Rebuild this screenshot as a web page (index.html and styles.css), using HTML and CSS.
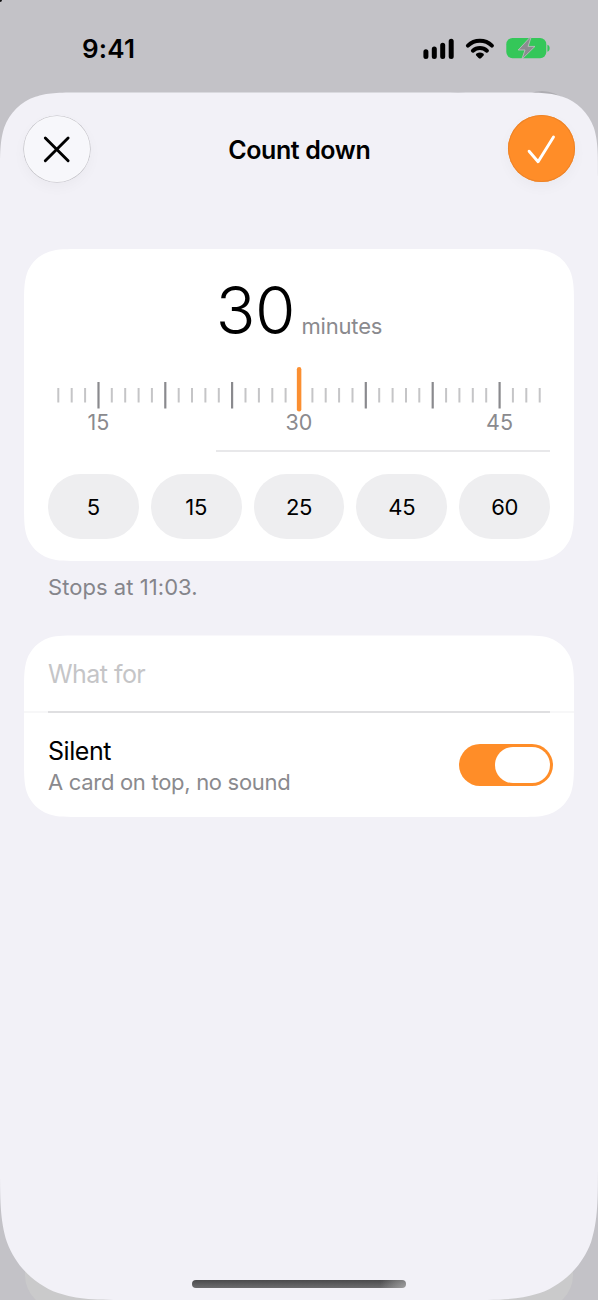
FILE: index.html
```html
<!DOCTYPE html>
<html lang="en">
<head>
<meta charset="utf-8">
<title>Count down</title>
<link rel="stylesheet" href="styles.css">
</head>
<body>
<div class="screen">
  <div class="backdrop-card"></div>
  <div class="backdrop-button first"></div>
  <div class="backdrop-button second"></div>
  <div class="corner-dot"></div>
  <header class="status">
    <span class="time">9:41</span>
    <svg class="status-icons" width="128" height="24" viewBox="0 0 128 24">
      <g stroke="#000" stroke-width="5" stroke-linecap="round">
        <path d="M2.900 15.800v4.700M11.300 13v7.500M19.700 9.200v11.300M28.200 5.200v15.300"/>
      </g>
      <g fill="none" stroke="#000" stroke-width="4" stroke-linecap="round">
        <path d="M44.900 9.600a17.300 17.300 0 0 1 24 0"/>
        <path d="M49.900 14.700a10.300 10.300 0 0 1 14 0"/>
      </g>
      <path d="M56.900 16.500c2.200 0 4 1 4 2.200 0 .8-3.200 4-4 4s-4-3.200-4-4c0-1.200 1.800-2.200 4-2.200z"/>
      <rect x="83.300" y="2" width="40" height="20.300" rx="6.200" fill="#34c759"/>
      <path d="M124.400 8.700c3 .6 3 6.400 0 7z" fill="#34c759"/>
      <path d="M107.200 1.200 95.200 14h6.800l-3.200 9.300L112 10.400h-6.900l3-9.200z" fill="#8c8b90" stroke="#c3c2c7" stroke-width=".8" stroke-linejoin="round"/>
    </svg>
  </header>
  <main class="sheet">
    <nav class="navbar">
      <button class="round close" aria-label="Close">
        <svg width="66" height="66" viewBox="0 0 66 66"><path d="M21.300 22l22.800 22.800M44.100 22l-22.800 22.800" stroke="#000" stroke-width="2.900" stroke-linecap="round"/></svg>
      </button>
      <h1 class="title">Count down</h1>
      <button class="round done" aria-label="Done">
        <svg width="67" height="67" viewBox="0 0 67 67"><path d="M21.100 36.200l9 10.500L45.500 22" fill="none" stroke="#fff" stroke-width="2.900" stroke-linecap="round" stroke-linejoin="round"/></svg>
      </button>
    </nav>
    <section class="card timer">
      <div class="value"><span class="number">30</span><span class="unit">minutes</span></div>
      <svg class="ruler" width="502" height="46" viewBox="48 366 502 46">
        <path stroke="#c5c5c7" stroke-width="2" d="M58.300 388v14.500M71.700 388v14.500M85.100 388v14.500M111.800 388v14.500M125.200 388v14.500M138.600 388v14.500M151.900 388v14.500M178.700 388v14.500M192 388v14.500M205.400 388v14.500M218.800 388v14.500M245.500 388v14.500M258.900 388v14.500M272.300 388v14.500M285.600 388v14.500M312.400 388v14.500M325.700 388v14.500M339.100 388v14.500M352.500 388v14.500M379.200 388v14.500M392.600 388v14.500M406 388v14.500M419.300 388v14.500M446.100 388v14.500M459.400 388v14.500M472.800 388v14.500M486.200 388v14.500M512.900 388v14.500M526.300 388v14.500M539.700 388v14.500"/>
        <path stroke="#8a8a8e" stroke-width="2.200" d="M98.500 382v26.600M165.300 382v26.600M232.100 382v26.600M365.800 382v26.600M432.700 382v26.600M499.600 382v26.600"/>
        <path stroke="#fb8f31" stroke-width="4.500" stroke-linecap="round" d="M299.100 369.300v40"/>
      </svg>
      <div class="marks"><span>15</span><span>30</span><span>45</span></div>
      <div class="divider"></div>
      <div class="presets">
        <button>5</button><button>15</button><button>25</button><button>45</button><button>60</button>
      </div>
    </section>
    <p class="note">Stops at 11:03.</p>
    <section class="card options">
      <div class="field">What for</div>
      <div class="separator"></div>
      <div class="row">
        <div>
          <div class="label">Silent</div>
          <div class="sub">A card on top, no sound</div>
        </div>
        <div class="switch"><div class="knob"></div></div>
      </div>
    </section>
    <div class="home"></div>
  </main>
</div>
</body>
</html>
```
FILE: styles.css
```css
* { box-sizing: border-box; margin: 0; padding: 0; }
body { font-family: Inter, "Liberation Sans", sans-serif; color: #000; }
button { border: 0; font: inherit; color: inherit; }
svg { display: block; }

.screen { position: relative; width: 598px; height: 1300px; overflow: hidden; background: #c3c2c7; }
.backdrop-card { position: absolute; left: 25px; right: 25px; bottom: -9px; height: 60px; border-radius: 0 0 34px 34px; background: #cacacb; }
.backdrop-button { position: absolute; height: 66px; width: 66px; border-radius: 50%; background: #aeadb2; }
.backdrop-button.first { left: 425px; top: 91.500px; }
.backdrop-button.second { left: 509px; top: 91px; }
.corner-dot { position: absolute; left: 0; top: 0; width: 2px; height: 2px; background: #111; border-radius: 0 0 2px 0; }

.status { height: 92px; padding: 36px 47px 0 82px; display: flex; justify-content: space-between; align-items: flex-start; }
.time { font-size: 26px; line-height: 26px; font-weight: 600; letter-spacing: 0.2px; }
.status-icons { overflow: visible; }

.sheet {
  position: relative; height: 1208px; padding: 23px 23.500px 0 24px; background: #f2f1f7;
  clip-path: path("M85.600 .5C61 .5 48.600 .5 37.500 4.200L35.400 4.700C20.900 9.500 9.500 20.900 4.200 35.400C0 48.600 0 61 0 85.600V1067.400C0 1107.900 0 1128.100 6.900 1149.900C15.600 1173.700 34.300 1192.400 58.100 1201.100L61.600 1202C79.900 1208 100.100 1208 140.600 1208H457.400C497.900 1208 518.100 1208 536.400 1202L539.900 1201.100C563.700 1192.400 582.400 1173.700 591.100 1149.900C598 1128.100 598 1107.900 598 1067.400V85.600C598 61 598 48.600 593.800 35.400C588.500 20.900 577.100 9.500 562.600 4.700L560.500 4.200C549.400 .5 537 .5 512.400 .5Z");
}
.navbar { height: 67px; display: flex; justify-content: space-between; align-items: flex-start; margin: 0 -1px 0 0; }
.round { border-radius: 50%; width: 67px; height: 67px; }
.close { width: 66px; height: 66px; margin-top: .7px; background: #f7f7fb; box-shadow: 0 0 0 .6px #bbbac0, inset 0 0 2px #fff, 0 5px 14px rgba(0,0,0,.035); }
.done { margin-top: .4px; background: #ff8d28; box-shadow: inset 0 0 0 1px #ed8429, 0 5px 14px rgba(0,0,0,.035); }
.title { font-size: 25px; line-height: 30px; font-weight: 600; letter-spacing: -0.4px; margin-top: 20px; }

.card { width: 550px; background: #fff; padding: 0 24px; }
.timer {
  margin-top: 67px; height: 312px;
  clip-path: path("M59 0C42 0 33.600 0 25.900 2.500L24.400 2.900C14.400 6.500 6.500 14.400 2.900 24.400C0 33.600 0 42 0 59V253C0 270 0 278.400 2.900 287.600C6.500 297.600 14.400 305.500 24.400 309.100L25.900 309.500C33.600 312 42 312 59 312H491C508 312 516.400 312 524.100 309.500L525.600 309.100C535.600 305.500 543.500 297.600 547.100 287.600C550 278.400 550 270 550 253V59C550 42 550 33.600 547.100 24.400C543.500 14.400 535.600 6.500 525.600 2.900L524.100 2.500C516.400 0 508 0 491 0Z");
}
.value { height: 117px; padding-top: 22px; display: flex; justify-content: center; align-items: baseline; line-height: 80px; }
.number { font-size: 65.500px; font-weight: 300; letter-spacing: -0.6px; margin-right: 6.800px; }
.unit { font-size: 22px; letter-spacing: -0.2px; color: #8a8a8e; }
.marks { height: 18px; margin: 1px 0 0 25px; width: 452px; display: flex; justify-content: space-between; font-size: 21.500px; line-height: 18px; color: #8a8a8e; }
.marks span { width: 51px; text-align: center; }
.divider { height: 2px; margin: 19px 0 0 168px; background: #e8e8ea; }
.presets { display: grid; grid-template-columns: repeat(5, 1fr); gap: 12px; margin-top: 22px; }
.presets button { height: 65px; border-radius: 33px; background: #eeeef0; font-size: 22px; letter-spacing: -0.3px; text-align: center; }
.note { height: 74px; padding: 13px 24px 0; font-size: 22px; line-height: 27px; letter-spacing: 0.05px; color: #85858b; }

.options {
  height: 182px;
  clip-path: path("M59 .5C42 .5 33.600 .5 25.900 2.500L24.400 2.900C14.400 6.500 6.500 14.400 2.900 24.400C0 33.600 0 42 0 59V123C0 140 0 148.400 2.900 157.600C6.500 167.600 14.400 175.500 24.400 179.100L25.900 179.500C33.600 182 42 182 59 182H491C508 182 516.400 182 524.100 179.500L525.600 179.100C535.600 175.500 543.500 167.600 547.100 157.600C550 148.400 550 140 550 123V59C550 42 550 33.600 547.100 24.400C543.500 14.400 535.600 6.500 525.600 2.900L524.100 2.500C516.400 .5 508 .5 491 .5Z");
}
.field { height: 76px; padding-top: 24px; font-size: 25px; line-height: 30px; letter-spacing: -0.550px; color: #c5c5c7; }
.separator { height: 2px; margin: 0 -24px; background: linear-gradient(90deg, #f7f7f8 24px, #dfdfe1 24px 526px, #f7f7f8 526px); }
.row { display: flex; justify-content: space-between; padding-top: 22px; margin-right: -3.300px; }
.label { font-size: 25px; line-height: 32px; letter-spacing: -0.450px; }
.sub { font-size: 22px; line-height: 30px; letter-spacing: -0.3px; color: #8a8a8e; }
.switch { width: 94px; height: 42px; margin-top: 9px; padding: 3px; border-radius: 21px; background: #ff8d28; display: flex; justify-content: flex-end; }
.knob { width: 55px; height: 36px; border-radius: 18px; background: #fff; }
.home { position: absolute; left: 192px; top: 1188px; width: 214px; height: 8px; border-radius: 4px; background: radial-gradient(circle at right bottom, rgba(180,180,180,.7), transparent 26px), linear-gradient(#4a4a4c, #6c6c6e); }
```
